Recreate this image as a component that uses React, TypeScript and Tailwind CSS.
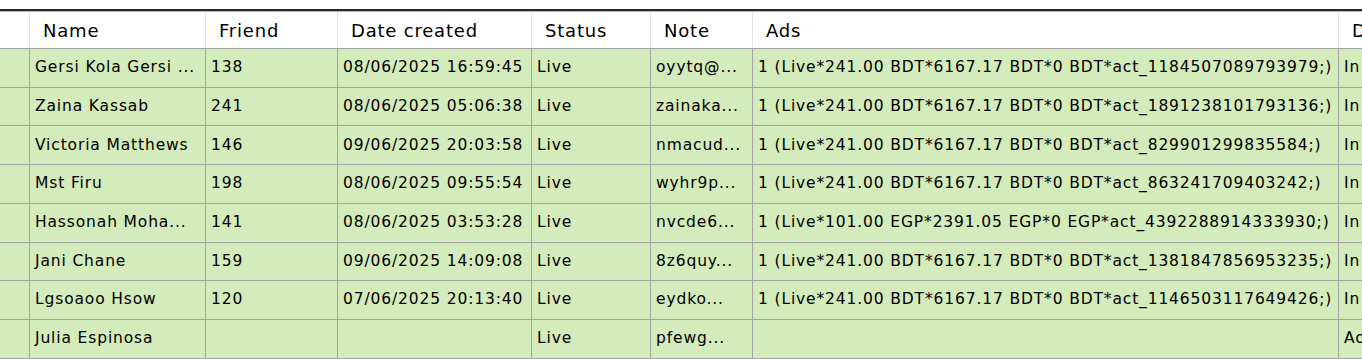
import React from "react";

type Row = {
  name: string;
  friend: string;
  date: string;
  status: string;
  note: string;
  ads: string;
  last: string;
};

const bdt = (act: string) =>
  `1 (Live*241.00 BDT*6167.17 BDT*0 BDT*act_${act};)`;

const rows: Row[] = [
  { name: "Gersi Kola Gersi ...", friend: "138", date: "08/06/2025 16:59:45", status: "Live", note: "oyytq@...", ads: bdt("1184507089793979"), last: "In" },
  { name: "Zaina Kassab", friend: "241", date: "08/06/2025 05:06:38", status: "Live", note: "zainaka...", ads: bdt("1891238101793136"), last: "In" },
  { name: "Victoria Matthews", friend: "146", date: "09/06/2025 20:03:58", status: "Live", note: "nmacud...", ads: bdt("829901299835584"), last: "In" },
  { name: "Mst Firu", friend: "198", date: "08/06/2025 09:55:54", status: "Live", note: "wyhr9p...", ads: bdt("863241709403242"), last: "In" },
  { name: "Hassonah Moha...", friend: "141", date: "08/06/2025 03:53:28", status: "Live", note: "nvcde6...", ads: "1 (Live*101.00 EGP*2391.05 EGP*0 EGP*act_4392288914333930;)", last: "In" },
  { name: "Jani Chane", friend: "159", date: "09/06/2025 14:09:08", status: "Live", note: "8z6quy...", ads: bdt("1381847856953235"), last: "In" },
  { name: "Lgsoaoo Hsow", friend: "120", date: "07/06/2025 20:13:40", status: "Live", note: "eydko...", ads: bdt("1146503117649426"), last: "In" },
  { name: "Julia Espinosa", friend: "", date: "", status: "Live", note: "pfewg...", ads: "", last: "Ac" },
];

// column widths include the 1px right border
const cols = ["w-[30px]", "w-[176px]", "w-[132px]", "w-[194px]", "w-[119px]", "w-[102px]", "w-[586px]", "w-[40px]"];
const headers = ["", "Name", "Friend", "Date created", "Status", "Note", "Ads", "D"];

function HeaderCell({ i, label }: { i: number; label: string }) {
  return (
    <div
      className={`${cols[i]} shrink-0 flex items-center overflow-hidden whitespace-nowrap border-r border-[#e4e4e4] pl-[13px] text-[18px] tracking-[0.8px] text-black`}
    >
      {label}
    </div>
  );
}

function Cell({ i, children }: { i: number; children?: React.ReactNode }) {
  return (
    <div
      className={`${cols[i]} shrink-0 flex items-center overflow-hidden whitespace-nowrap border-r border-[#a3a3a3] pl-[5px] text-[15.5px] tracking-[0.86px] text-black`}
    >
      {children}
    </div>
  );
}

export default function App() {
  return (
    <div
      className="h-[359px] w-[1362px] overflow-hidden bg-white"
      style={{ fontFamily: '"DejaVu Sans", Verdana, sans-serif' }}
    >
      <div className="h-[9px] bg-white" />
      <div className="border-t-2 border-[#2a2a2a]" />
      <div className="flex h-[38px] border-t border-b border-[#a3a3a3] border-t-[#b8b8b8] bg-white">
        {headers.map((h, i) => (
          <HeaderCell key={i} i={i} label={h} />
        ))}
      </div>
      {rows.map((r, idx) => (
        <div key={idx} className="flex h-[38.71px] border-b border-[#a3a3a3] bg-[#d4ebbb]">
          <Cell i={0} />
          <Cell i={1}>{r.name}</Cell>
          <Cell i={2}>{r.friend}</Cell>
          <Cell i={3}>{r.date}</Cell>
          <Cell i={4}>{r.status}</Cell>
          <Cell i={5}>{r.note}</Cell>
          <Cell i={6}>{r.ads}</Cell>
          <Cell i={7}>{r.last}</Cell>
        </div>
      ))}
    </div>
  );
}
